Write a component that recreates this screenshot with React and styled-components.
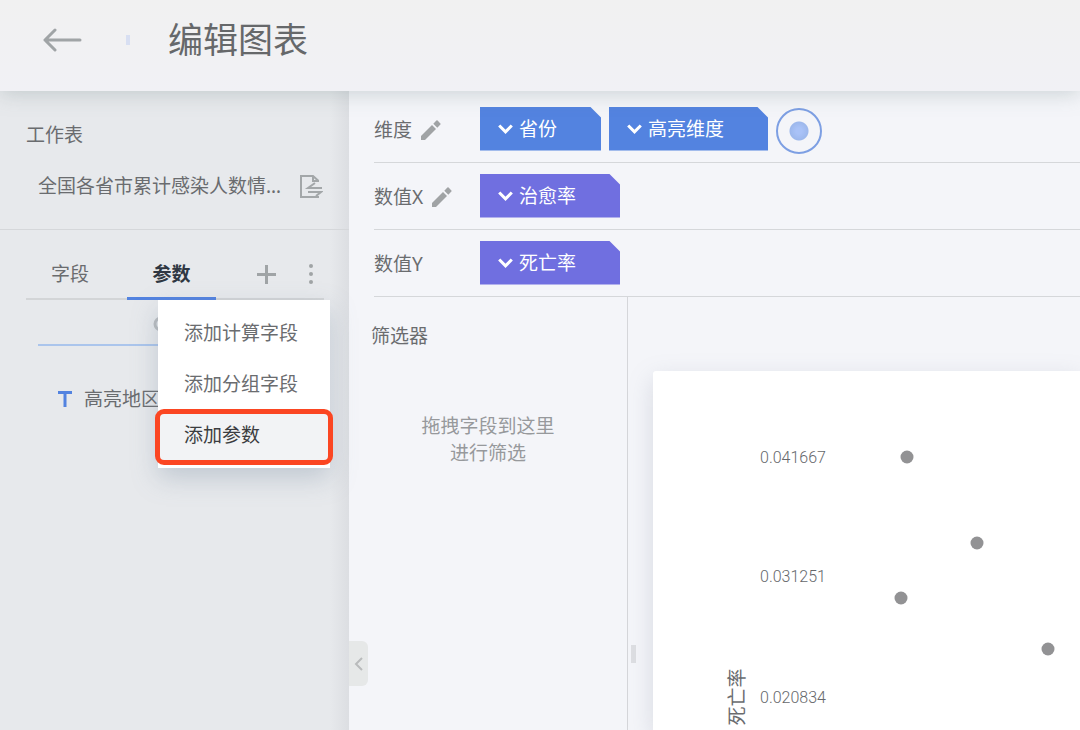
import React from 'react'
import styled, { createGlobalStyle } from 'styled-components'

const points = [
  { x: 907, y: 457 },
  { x: 977, y: 543 },
  { x: 901, y: 598 },
  { x: 1048, y: 649 },
]

const ticks = [
  { y: 457, label: '0.041667' },
  { y: 576, label: '0.031251' },
  { y: 697, label: '0.020834' },
]

const shelves = [
  { name: '维度', editable: true, color: '#5383e0', fields: ['省份', '高亮维度'], drop: true },
  { name: '数值X', editable: true, color: '#706fe0', fields: ['治愈率'] },
  { name: '数值Y', color: '#706fe0', fields: ['死亡率'] },
]

const Pencil = () => (
  <svg width="20" height="20" viewBox="0 0 20 20" fill="#a0a3a5">
    <path d="M0 16 L11 5 L15 9 L4 20 H0 Z" />
    <path d="M12.3 3.7 L15.4 0.6 Q16 0 16.6 0.6 L19.4 3.4 Q20 4 19.4 4.6 L16.3 7.7 Z" />
  </svg>
)

const Chevron = () => (
  <svg width="15" height="10" viewBox="0 0 15 10" fill="none" stroke="#fff" strokeWidth="3">
    <path d="M1.2 1.5 L7.5 7.8 L13.8 1.5" />
  </svg>
)

const App = () => {
  return (
    <Page>
      <GlobalStyle />
      <Header>
        <IconButton aria-label="返回">
          <svg width="40" height="24" viewBox="0 0 40 24" fill="none" stroke="#a0a4a6" strokeWidth="3" strokeLinecap="round" strokeLinejoin="round">
            <path d="M37 12 H2 M12 2 L2 12 L12 22" />
          </svg>
        </IconButton>
        <Mark />
        <Title>编辑图表</Title>
      </Header>

      <Body>
        <Sidebar>
          <Worksheet>
            <SectionTitle>工作表</SectionTitle>
            <SheetRow>
              <span>全国各省市累计感染人数情…</span>
              <IconButton aria-label="切换工作表">
                <svg width="24" height="24" viewBox="0 0 24 24" fill="none" stroke="#a3a7a9" strokeWidth="2">
                  <path d="M19 8 V6.5 L14 2 H2 V23 H20" />
                  <path d="M14 2 V7 H19" />
                  <path d="M23 14 H9 L16 9 M9 18 H22 L17 22" />
                </svg>
              </IconButton>
            </SheetRow>
          </Worksheet>

          <Fields>
            <TabBar>
              <Tab>字段</Tab>
              <Tab $active>参数</Tab>
              <Tools>
                <IconButton aria-label="添加">
                  <svg width="19" height="19" viewBox="0 0 19 19" stroke="#a0a4a6" strokeWidth="3">
                    <path d="M9.5 0 V19 M0 9.5 H19" />
                  </svg>
                </IconButton>
                <IconButton aria-label="更多">
                  <svg width="6" height="20" viewBox="0 0 6 20" fill="#a0a4a6">
                    <circle cx="3" cy="2" r="2" />
                    <circle cx="3" cy="10" r="2" />
                    <circle cx="3" cy="18" r="2" />
                  </svg>
                </IconButton>
              </Tools>
              <Menu>
                <MenuItem>添加计算字段</MenuItem>
                <MenuItem>添加分组字段</MenuItem>
                <MenuItem $marked>添加参数</MenuItem>
              </Menu>
            </TabBar>
            <SearchBox>
              <svg width="18" height="18" viewBox="0 0 18 18" fill="none" stroke="#b9bcbf" strokeWidth="3">
                <circle cx="8" cy="8" r="6" />
                <path d="M12 12 L17 17" />
              </svg>
              <SearchInput aria-label="搜索" />
            </SearchBox>
            <Param>
              <svg width="14" height="16" viewBox="0 0 14 16" stroke="#5383e0" strokeWidth="3">
                <path d="M0 1.5 H14 M7 1.5 V16" />
              </svg>
              高亮地区
            </Param>
          </Fields>
        </Sidebar>

        <Main>
          <Collapse aria-label="收起">
            <svg width="9" height="14" viewBox="0 0 9 14" fill="none" stroke="#b9bbbc" strokeWidth="2">
              <path d="M8 1 L2 7 L8 13" />
            </svg>
          </Collapse>
          <Shelves>
            {shelves.map((shelf) => (
              <Shelf key={shelf.name}>
                <ShelfName>
                  {shelf.name}
                  {shelf.editable && (
                    <IconButton aria-label={'编辑' + shelf.name}>
                      <Pencil />
                    </IconButton>
                  )}
                </ShelfName>
                <Chips>
                  {shelf.fields.map((field) => (
                    <Chip key={field} $color={shelf.color}>
                      <Chevron />
                      {field}
                    </Chip>
                  ))}
                  {shelf.drop && <DropTarget />}
                </Chips>
              </Shelf>
            ))}
          </Shelves>

          <Work>
            <Filters>
              <FilterTitle>筛选器</FilterTitle>
              <FilterHint>
                拖拽字段到这里
                <br />
                进行筛选
              </FilterHint>
            </Filters>
            <Gutter>
              <Handle />
            </Gutter>
            <ChartCard>
              {/* drawn in page units, origin at the corner of the card */}
              <svg width="427" height="359" viewBox="653 371 427 359" overflow="visible">
                {ticks.map((t) => (
                  <TickText key={t.label} x="760" y={t.y + 6}>
                    {t.label}
                  </TickText>
                ))}
                <AxisText transform="translate(744 697) rotate(-90)">死亡率</AxisText>
                {points.map((p) => (
                  <circle key={p.x} cx={p.x} cy={p.y} r="6.5" fill="#929294" />
                ))}
              </svg>
            </ChartCard>
          </Work>
        </Main>
      </Body>
    </Page>
  )
}

const GlobalStyle = createGlobalStyle`
  * {
    box-sizing: border-box;
  }
  body {
    margin: 0;
    color: #6a6c6f;
    font-family: "Noto Sans", "Noto Sans CJK SC", sans-serif;
    font-size: 19px;
    line-height: 28px;
  }
  button, input {
    font: inherit;
    color: inherit;
    border: 0;
    padding: 0;
    background: none;
  }
  svg {
    display: block;
    flex-shrink: 0;
  }
`;

const Page = styled.div`
  height: 100vh;
  display: flex;
  flex-direction: column;
  overflow: hidden;
`;

const Header = styled.header`
  flex-shrink: 0;
  height: 91px;
  display: flex;
  align-items: center;
  padding: 0 43px 12px;
  background: linear-gradient(#f1f1f1, #f1f1f5);
  box-shadow: 0 2px 20px rgba(120, 140, 140, 0.35);
  z-index: 2;
`;

const Mark = styled.span`
  width: 4px;
  height: 10px;
  margin: 0 38px 0 43px;
  background: #d8dff2;
`;

const Title = styled.h1`
  margin: 0;
  font-size: 35px;
  line-height: 48px;
  font-weight: 400;
  color: #66686a;
`;

const IconButton = styled.button`
  cursor: pointer;
`;

const Body = styled.div`
  flex: 1;
  min-height: 0;
  display: flex;
`;

const Sidebar = styled.aside`
  flex-shrink: 0;
  width: 349px;
  background: linear-gradient(to right, #e7e9ec 330px, #dcdee2);
  z-index: 1;
`;

const Worksheet = styled.section`
  padding: 30px 26px 29px;
  border-bottom: 1px solid #d5d7da;
`;

const SectionTitle = styled.h2`
  margin: 0 0 23px;
  font-size: 19px;
  font-weight: 400;
`;

const SheetRow = styled.div`
  display: flex;
  align-items: center;
  justify-content: space-between;
  gap: 12px;
  padding-left: 12px;
  white-space: nowrap;
`;

const Fields = styled.section`
  padding: 20px 25px 0 26px;
`;

const TabBar = styled.nav`
  position: relative;
  display: flex;
  height: 50px;
  border-bottom: 2px solid #d3d5d7;
`;

const Tab = styled.button`
  height: 50px;
  width: ${(props) => (props.$active ? '89px' : '88px')};
  margin-right: ${(props) => (props.$active ? '0' : '13px')};
  font-weight: ${(props) => (props.$active ? '700' : '400')};
  color: ${(props) => (props.$active ? '#2f3742' : 'inherit')};
  border-bottom: 3px solid ${(props) => (props.$active ? '#5383e0' : 'transparent')};
  cursor: pointer;
`;

const Tools = styled.div`
  flex: 1;
  display: flex;
  align-items: center;
  justify-content: flex-end;
  gap: 32px;
  padding-right: 10px;
`;

const Menu = styled.div`
  position: absolute;
  top: 50px;
  left: 132px;
  width: 172px;
  padding: 8px 0 7px;
  background: #fff;
  box-shadow: 0 10px 24px rgba(120, 140, 160, 0.35);
`;

const MenuItem = styled.button`
  position: relative;
  display: block;
  width: 100%;
  height: 51px;
  padding: 0 0 2px 26px;
  text-align: left;
  background: ${(props) => (props.$marked ? '#f2f3f5' : 'transparent')};
  color: ${(props) => (props.$marked ? '#3b3d40' : 'inherit')};
  cursor: pointer;

  &::after {
    content: '';
    display: ${(props) => (props.$marked ? 'block' : 'none')};
    position: absolute;
    inset: -1px -3px -4px;
    border: 5px solid #fb4622;
    border-radius: 9px;
  }
`;

const SearchBox = styled.label`
  display: flex;
  align-items: center;
  height: 46px;
  margin: 0 12px;
  padding: 6px 0 0 115px;
  border-bottom: 2px solid #abc5ec;
`;

const SearchInput = styled.input`
  flex: 1;
  min-width: 0;
  outline: none;
`;

const Param = styled.div`
  display: flex;
  align-items: center;
  gap: 12px;
  margin: 39px 0 0 32px;
`;

const Main = styled.main`
  position: relative;
  flex: 1;
  min-width: 0;
  display: flex;
  flex-direction: column;
  background: #f4f5f9;
`;

const Collapse = styled.button`
  position: absolute;
  left: 0;
  top: 550px;
  width: 19px;
  height: 45px;
  display: flex;
  align-items: center;
  justify-content: center;
  background: #e6e8e8;
  border-radius: 0 6px 6px 0;
  cursor: pointer;
`;

const Shelves = styled.div`
  padding: 5px 0 0 25px;
`;

const Shelf = styled.div`
  display: flex;
  align-items: center;
  height: 67px;
  padding-bottom: 1px;
  border-bottom: 1px solid #d5d7da;
`;

const ShelfName = styled.div`
  width: 106px;
  padding-top: 2px;
  display: flex;
  align-items: center;
  gap: 9px;
`;

const Chips = styled.div`
  display: flex;
  align-items: center;
  gap: 8px;
`;

const Chip = styled.button`
  display: flex;
  align-items: center;
  gap: 6px;
  height: 44px;
  padding: 0 44px 0 18px;
  color: #fff;
  background: ${(props) => props.$color};
  clip-path: polygon(0 0, calc(100% - 11px) 0, 100% 11px, 100% 100%, 0 100%);
  cursor: pointer;
`;

const DropTarget = styled.span`
  width: 46px;
  height: 46px;
  margin-top: 4px;
  border: 2px solid #7d9fe3;
  border-radius: 50%;
  background: radial-gradient(circle, #a9c2f7 3px, #9db8ec 9px, transparent 10px);
`;

const Work = styled.div`
  flex: 1;
  min-height: 0;
  display: flex;
`;

const Filters = styled.section`
  flex-shrink: 0;
  width: 279px;
  padding: 25px 0 0;
  border-right: 1px solid #d5d6da;
`;

const FilterTitle = styled.h2`
  margin: 0 0 63px 22px;
  font-size: 19px;
  font-weight: 400;
`;

const FilterHint = styled.p`
  margin: 0;
  text-align: center;
  line-height: 27px;
  color: #97999c;
`;

const Gutter = styled.div`
  flex-shrink: 0;
  width: 25px;
  padding: 348px 0 0 3px;
`;

const Handle = styled.div`
  width: 5px;
  height: 18px;
  background: #dddee2;
`;

const ChartCard = styled.section`
  flex: 1;
  min-width: 0;
  margin-top: 74px;
  background: #fff;
  border-radius: 3px 0 0 0;
  box-shadow: 0 8px 24px rgba(130, 140, 160, 0.25);
`;

const TickText = styled.text`
  font-family: Roboto, sans-serif;
  font-size: 16px;
  font-weight: 300;
  fill: #66686b;
`;

const AxisText = styled.text`
  font-size: 19px;
  text-anchor: middle;
  fill: #6a6c6f;
`;

export default App
